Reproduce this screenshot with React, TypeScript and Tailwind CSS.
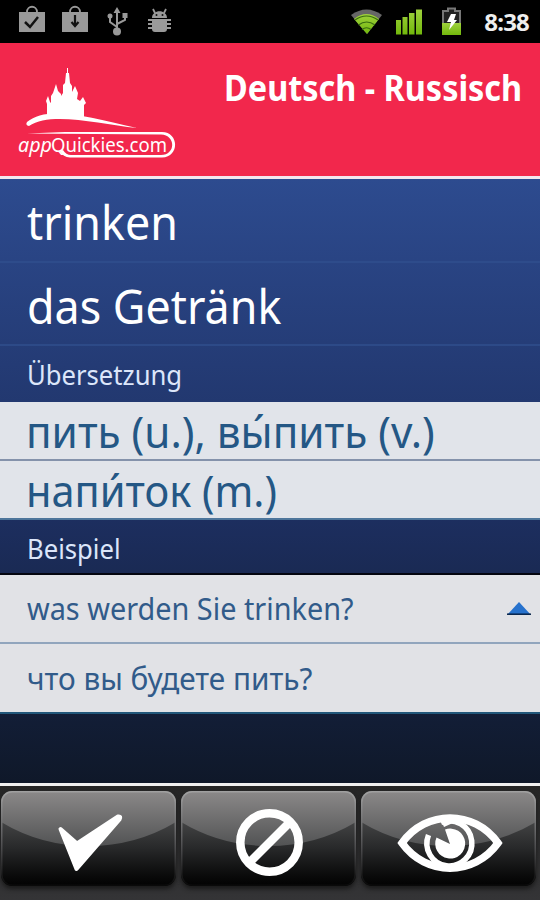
import type { ReactNode } from 'react'

const WORDS = ['trinken', 'das Getränk']

export default function App() {
  return (
    <div className="flex h-[900px] w-[540px] flex-col overflow-hidden bg-black font-['Noto_Sans','Open_Sans',sans-serif]">
      <StatusBar />
      <header className="flex h-[136px] shrink-0 items-start justify-between border-b-[3px] border-[#f4e6ee] bg-[#f2274c]">
        <Logo />
        <h1 className="mr-[18px] mt-[21px] origin-right scale-x-90 whitespace-nowrap text-[36px] font-bold leading-[48px] text-white">
          Deutsch - Russisch
        </h1>
      </header>

      <main className="flex h-[604px] shrink-0 flex-col bg-linear-to-b from-[#2d4b8f] via-[#1d2f61] via-55% to-[#0f1829]">
        {WORDS.map(w => (
          <div key={w} className="h-[83.5px] shrink-0 border-b-2 border-[#31508e]/70 pl-[26.500px] text-[48px] leading-[85px] text-white">
            <span className="inline-block origin-left scale-x-[0.934]">{w}</span>
          </div>
        ))}
        <Section className="h-[56px] pt-[2px]">Übersetzung</Section>
        <Answer className="h-[59px] border-b-2 border-[#8492ab]">
          <span className="origin-left scale-x-[0.972]">пить (u.), вы́пить (v.)</span>
        </Answer>
        <Answer className="h-[59px] border-b-2 border-[#4d759b]">
          <span className="origin-left scale-x-[0.955]">напи́ток (m.)</span>
        </Answer>
        <Section className="h-[55px] border-b-2 border-[#03050f] pt-[6px]">Beispiel</Section>
        <Example className="h-[69px] border-b-2 border-[#91a5bd]">
          <span className="origin-left scale-x-[0.962]">was werden Sie trinken?</span>
          <svg width="26" height="16" viewBox="0 0 26 16" className="mr-[8px]">
            <path d="M13 1 L25 14 H1 Z" fill="#2772cd" />
            <path d="M1 13.2 H25" stroke="#092449" strokeWidth="1.5" />
          </svg>
        </Example>
        <Example className="h-[70px] border-b-2 border-[#21577a]">
          <span className="origin-left scale-x-[0.992]">что вы будете пить?</span>
        </Example>
      </main>

      <footer className="flex h-[117px] shrink-0 items-start gap-[4px] border-t-[3px] border-[#f0f0f0] bg-linear-to-b from-[#252525] to-[#343436] pt-[5px] pl-px">
        <GlossButton>
          <path d="M59.500 38 L76 52.500 L117 25.500 Q120.500 25 118.500 28.500 L75.500 78 Z" fill="#fff" stroke="#fff" strokeWidth="4" strokeLinejoin="round" />
        </GlossButton>
        <GlossButton>
          <g fill="none" stroke="#fff" strokeWidth="8.500">
            <circle cx="88.500" cy="51.500" r="29.200" />
            <path d="M68 72 L109 31" />
          </g>
        </GlossButton>
        <GlossButton>
          <g fill="none" stroke="#fff">
            <path d="M41 52 C65 18.500 113 18.500 137 52 C113 85.500 65 85.500 41 52 Z" strokeWidth="7.500" />
            <path d="M67.500 44 A22.500 22.500 0 1 0 80 31.500" strokeWidth="5.500" />
            <path d="M89 53 L84 38.500 A15 15 0 1 1 75.500 46.500 Z" fill="#fff" stroke="none" />
            <path d="M80 29 L83 36 L94 31 Z" fill="#fff" stroke="none" />
          </g>
        </GlossButton>
      </footer>
    </div>
  )
}

function Section({ className, children }: { className: string; children: ReactNode }) {
  return (
    <div className={`flex shrink-0 items-center pl-[26.500px] text-[27px] text-[#dce6fa] ${className}`}>
      <span className="origin-left scale-x-[0.95]">{children}</span>
    </div>
  )
}

function Answer({ className, children }: { className: string; children: ReactNode }) {
  return (
    <div className={`flex shrink-0 items-center whitespace-nowrap bg-[#e1e4ea] pl-[26px] pt-px text-[43.500px] leading-[57px] text-[#245785] ${className}`}>
      {children}
    </div>
  )
}

function Example({ className, children }: { className: string; children: ReactNode }) {
  return (
    <div className={`flex shrink-0 items-center justify-between whitespace-nowrap bg-[#e1e2e6] pl-[27px] text-[30px] text-[#315b8a] ${className}`}>
      {children}
    </div>
  )
}

function GlossButton({ children }: { children: ReactNode }) {
  return (
    <button className="relative h-[95px] w-[175px] mr-px shrink-0 overflow-hidden rounded-[11px] bg-linear-to-b from-[#666] via-[#28292a] via-60% to-[#030303] shadow-[0_3px_4px_#1b1b1b]">
      <svg width="175" height="95" viewBox="0 0 175 95" className="block">
        <defs>
          <linearGradient id="gloss" x1="0" y1="0" x2="0" y2="1">
            <stop offset="0" stopColor="#8b8989" />
            <stop offset="1" stopColor="#525354" />
          </linearGradient>
          <linearGradient id="edge" x1="0" y1="0" x2="0" y2="1">
            <stop offset="0" stopColor="#a0a0a0" />
            <stop offset="0.6" stopColor="#4c4c4e" />
            <stop offset="1" stopColor="#0a0a0a" />
          </linearGradient>
        </defs>
        <path d="M0 0 H175 V31 Q135 55 87.500 55 Q40 55 0 31 Z" fill="url(#gloss)" />
        <rect x="0.75" y="0.75" width="173.500" height="93.500" rx="10.500" fill="none" stroke="url(#edge)" strokeWidth="1.500" />
        {children}
      </svg>
    </button>
  )
}

function Logo() {
  return (
    <svg width="190" height="132" viewBox="0 43 190 132" fill="#fff" className="shrink-0">
      <path d="M47 118 V104 L46 101 L48 96 L50 102 L51 103 V96 L53 93 L56 84 L58 91 L61 94 V96 L63 93 V85 L65 83 L66 73 H67 V68 H68 V73 H69 L70 83 L72 86 V92 L75 86 L78 93 L77 99 L80 101 L83 97 L86 103 L84 105 V118 Z" />
      <path d="M27 122 C46 106 83 115 137 128 C99 124 51 111 29 126 Q25 125 27 122 Z" />
      <path d="M27 133.500 L65 132 H162 C179 132 180 157 162 157.500 H70 Q63 157 60 151 L63 150 Q66 155 71 155 H161 C176 155 176 135 161 134.500 Z" />
      <text x="18" y="152" fontSize="20" fontStyle="italic" textLength="34" lengthAdjust="spacingAndGlyphs">app</text>
      <text x="51" y="152" fontSize="20" textLength="116" lengthAdjust="spacingAndGlyphs">Quickies.com</text>
    </svg>
  )
}

function StatusBar() {
  return (
    <div className="flex h-[43px] shrink-0 items-center justify-between bg-black">
      <svg width="180" height="43" viewBox="0 0 180 43" fill="#999">
        <path d="M19 12 H45 V32 H19 Z M62 12 H88 V32 H62 Z" />
        <path d="M27 12 C27 5 37 5 37 12 M70 12 C70 5 80 5 80 12" fill="none" stroke="#999" strokeWidth="1.800" />
        <path d="M25 22 L30 27 L38 17" fill="none" stroke="#111" strokeWidth="2.500" />
        <path d="M75 15 V25 M71.500 22 L75 26 L78.500 22" fill="none" stroke="#111" strokeWidth="2.200" />
        <path d="M117 31 V10 M117 27 L110 22 V16 M117 24 L125 20 V15" fill="none" stroke="#999" strokeWidth="2" />
        <path d="M113.500 13 L117 7 L120.500 13 Z M122.500 13 H127.500 V18 H122.500 Z" />
        <circle cx="110" cy="16" r="2.500" />
        <circle cx="117" cy="31.500" r="4" />
        <path d="M152 18 C152 9 167 9 167 18 Z M152 19.500 H167 V29 Q167 32 164 32 H155 Q152 32 152 29 Z" />
        <path d="M155 13 L153 9 M164 13 L166 9 M148 20 H171 M148 24 H171 M148 28 H171" stroke="#999" strokeWidth="1.800" />
        <circle cx="156.500" cy="15" r="1" fill="#111" />
        <circle cx="162.500" cy="15" r="1" fill="#111" />
      </svg>
      <div className="flex items-center">
        <svg width="120" height="43" viewBox="345 0 120 43">
          <defs>
            <linearGradient id="green" x1="0" y1="0" x2="0" y2="1">
              <stop offset="0" stopColor="#9fd13d" />
              <stop offset="1" stopColor="#72b80c" />
            </linearGradient>
          </defs>
          <path d="M351 15 Q366.500 4 382 15 L367 34 Z" fill="#666" />
          <path d="M354 19 Q366.500 9 379 19 L367 34 Z" fill="url(#green)" />
          <path d="M355 20 Q366.500 12 378 20 M358.500 25 Q366.500 19 375 25 M362 29.500 Q366.500 26 371 29.500" fill="none" stroke="#386b10" strokeWidth="1.200" />
          <path d="M396 20 H401 V34.500 H396 Z M402.500 17 H407.500 V34.500 H402.500 Z M409 13 H414.500 V34.500 H409 Z M416 9.500 H422 V34.500 H416 Z" fill="url(#green)" />
          <path d="M443 11 H448 V8.500 H455 V11 H460 V34 H443 Z" fill="#222" stroke="#777" strokeWidth="2" />
          <path d="M442 23 H461 V35 H442 Z" fill="url(#green)" />
          <path d="M451 14 H456 L454 20 H457 L449 30 L451 22 H447 Z" fill="#fff" />
        </svg>
        <span className="mr-[11px] w-[64px] whitespace-nowrap text-right text-[24px] font-bold leading-[43px] tracking-[-0.8px] text-[#eee]">8:38</span>
      </div>
    </div>
  )
}
